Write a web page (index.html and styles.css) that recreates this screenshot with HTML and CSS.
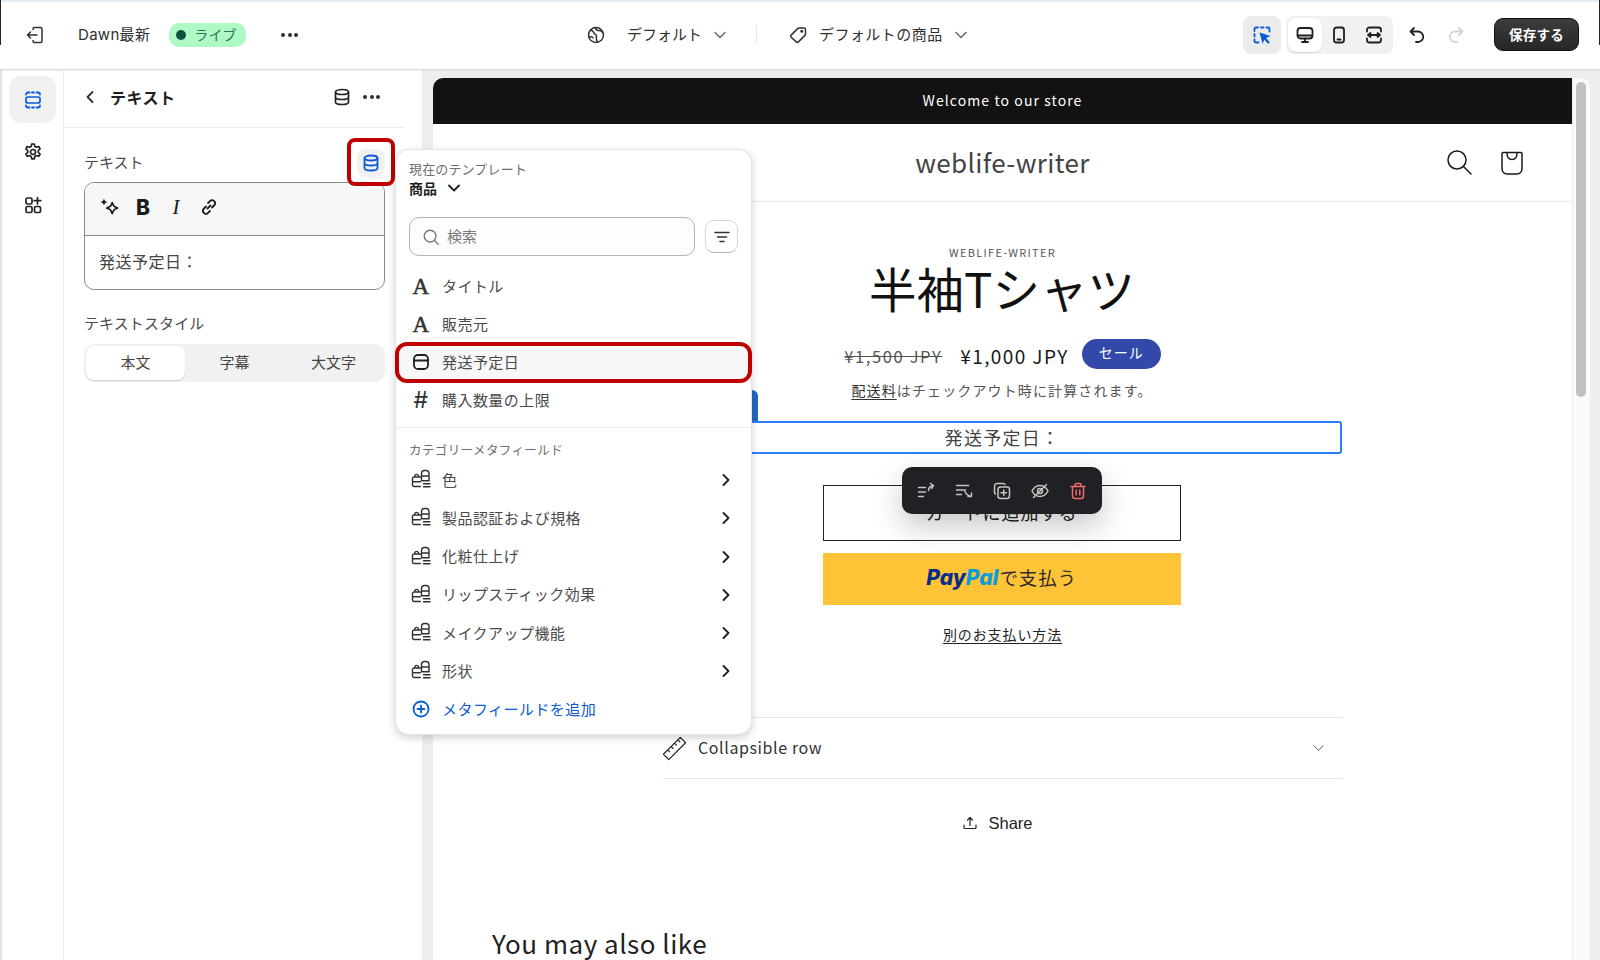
FILE: index.html
```html
<!DOCTYPE html>
<html lang="ja">
<head>
<meta charset="utf-8">
<title>テーマエディタ</title>
<link rel="stylesheet" href="styles.css">
</head>
<body>
<svg class="sprite"><symbol id="cat" viewBox="0 0 20 20"><path d="M9.300 17.500H3A1.500 1.500 0 0 1 1.500 16V9.500A1.500 1.500 0 0 1 3 8h6.300M3.700 8V6.800a2 2 0 0 1 3.800 0V8M1.500 12.800h7.800M10.500 11.800V4.500a3 3 0 0 1 3-3h1.500a3 3 0 0 1 3 3v7.300ZM10.500 7h7.500M12.500 14.800H19M12.500 17.800H19"/></symbol></svg>
<div class="app">
  <header class="topbar">
    <div class="tb-left">
      <svg class="ic20 exit" viewBox="0 0 20 20"><path d="M8 4.500V4a1.500 1.500 0 0 1 1.500-1.500h6A1.500 1.500 0 0 1 17 4v12a1.500 1.500 0 0 1-1.500 1.500h-6A1.500 1.500 0 0 1 8 16v-.5M12 10H2.500M5.500 7l-3 3 3 3"/></svg>
      <span class="theme">Dawn最新</span>
      <span class="live"><i class="dot"></i><span class="live-t">ライブ</span></span>
      <span class="dots"><i></i><i></i><i></i></span>
    </div>
    <div class="tb-center">
      <svg class="ic20 globe" viewBox="0 0 20 20"><circle cx="10" cy="10" r="7.500"/><path d="M4.500 5c2 .5 3 1.500 3.500 3 .4 1.300 2 1.300 2.500 2.500.4 1-.6 2-.2 3.200.3 1 .7 2 1 3.500M9.500 2.600c0 2 1.500 3 3 3 1.200 0 2.500.2 4 1.500M3 12.500c1.500-1 3-.8 4 .2"/></svg>
      <span class="ctx">デフォルト</span>
      <svg class="chev-g" viewBox="0 0 12 8"><path d="M1 1.500 6 6.500l5-5"/></svg>
      <span class="vsep"></span>
      <svg class="ic20 tag" viewBox="0 0 20 20"><path d="M11.500 3H16a1.500 1.500 0 0 1 1.500 1.500V9a2 2 0 0 1-.6 1.400l-6.500 6.500a1.500 1.500 0 0 1-2.100 0L3.100 12.200a1.500 1.500 0 0 1 0-2.100l6.500-6.500A2.800 2.800 0 0 1 11.500 3Z"/><circle cx="13.800" cy="6.200" r=".8"/></svg>
      <span class="ctx ctx2">デフォルトの商品</span>
      <svg class="chev-g" viewBox="0 0 12 8"><path d="M1 1.500 6 6.500l5-5"/></svg>
    </div>
    <div class="tb-right">
      <span class="sel-btn">
        <svg class="ic20 blue sel-ic" viewBox="0 0 20 20"><path class="dash" d="M6 2.500H4A1.500 1.500 0 0 0 2.500 4v2M2.500 9v2.500M2.500 14.500V16A1.500 1.500 0 0 0 4 17.500h2.500M9 2.500h2.500M14.500 2.500H16A1.500 1.500 0 0 1 17.500 4v2.500"/><path class="fillb" d="m7.500 7.500 11 3.500-4.500 2 3.800 4.200-1.800 1.500-3.800-4.200-1.500 4.500Z"/></svg>
      </span>
      <div class="device">
        <span class="dev active"><svg class="ic20" viewBox="0 0 20 20"><rect x="2.500" y="3" width="15" height="10.500" rx="3"/><path d="M3 10.500h14M7 17h6M10 13.500V17"/></svg></span>
        <span class="dev"><svg class="ic20" viewBox="0 0 20 20"><rect x="5" y="2.500" width="10" height="15" rx="2.500"/><path d="M8.500 14.500h3"/></svg></span>
        <span class="dev"><svg class="ic20" viewBox="0 0 20 20"><path d="M3 6.500V5a2.500 2.500 0 0 1 2.500-2.500h9A2.500 2.500 0 0 1 17 5v1.500M3 13.500V15a2.500 2.500 0 0 0 2.500 2.500h9A2.500 2.500 0 0 0 17 15v-1.500M5 10h10M6.500 8l-2.500 2 2.500 2M13.500 8l2.500 2-2.500 2"/></svg></span>
      </div>
      <svg class="ic20 undo" viewBox="0 0 20 20"><path d="M7 3 3.500 6.500 7 10M3.500 6.500H11a4.500 4.500 0 0 1 0 10.500H9"/></svg>
      <svg class="ic20 redo" viewBox="0 0 20 20"><path d="m13 3 3.500 3.500L13 10M16.500 6.500H9A4.500 4.500 0 0 0 9 17h2"/></svg>
      <span class="save">保存する</span>
    </div>
  </header>

  <div class="main">
    <nav class="rail">
      <span class="rail-item on"><svg class="ic20 blue" viewBox="0 0 20 20"><rect x="3" y="7" width="14" height="6" rx="2"/><path class="dash" d="M3 4.500A2 2 0 0 1 5 2.500h1.500M9 2.500h2M13.500 2.500H15a2 2 0 0 1 2 2M3 15.500a2 2 0 0 0 2 2h1.500M9 17.500h2M13.500 17.500H15a2 2 0 0 0 2-2"/></svg></span>
      <span class="rail-item"><svg class="ic20" viewBox="0 0 20 20"><circle cx="10" cy="10" r="2.500"/><path d="M8.700 2h2.600l.5 2.400 1.700.9 2.300-.8 1.300 2.300-1.800 1.700v1.800l1.800 1.700-1.300 2.300-2.300-.8-1.700.9-.5 2.400H8.700l-.5-2.400-1.700-.9-2.300.8-1.300-2.300 1.800-1.700V8.500L2.900 6.800l1.300-2.300 2.300.8 1.700-.9Z"/></svg></span>
      <span class="rail-item"><svg class="ic20" viewBox="0 0 20 20"><rect x="3" y="3" width="6" height="6" rx="1.500"/><rect x="3" y="11.500" width="6" height="6" rx="1.500"/><rect x="11.500" y="11.500" width="6" height="6" rx="1.500"/><path d="M14.500 2.500v6.500M11.200 5.700h6.600"/></svg></span>
    </nav>

    <aside class="panel">
      <div class="panel-head">
        <svg class="back" viewBox="0 0 10 14"><path d="M7.500 2 2.500 7l5 5"/></svg>
        <span class="panel-title">テキスト</span>
        <svg class="ic20 db-head" viewBox="0 0 20 20"><ellipse cx="10" cy="5" rx="6.500" ry="2.500"/><path d="M3.500 5v10c0 1.400 2.900 2.500 6.500 2.500s6.500-1.100 6.500-2.500V5M3.500 10c0 1.400 2.900 2.500 6.500 2.500s6.500-1.100 6.500-2.500"/></svg>
        <span class="dots dark"><i></i><i></i><i></i></span>
      </div>
      <div class="panel-body">
        <div class="field-label">
          <span class="fl-text">テキスト</span>
          <span class="db-btn"><svg class="ic20 blue db-blue" viewBox="0 0 20 20"><ellipse cx="10" cy="5" rx="6.500" ry="2.500"/><path d="M3.500 5v10c0 1.400 2.900 2.500 6.500 2.500s6.500-1.100 6.500-2.500V5M3.500 10c0 1.400 2.900 2.500 6.500 2.500s6.500-1.100 6.500-2.500"/></svg></span>
        </div>
        <div class="editor">
          <div class="ed-tools">
            <svg class="ic20 spark" viewBox="0 0 20 20"><path d="m12 6 1.600 3.400 3.400 1.600-3.400 1.600L12 16l-1.600-3.400L7 11l3.400-1.600Z"/><path class="fillk" d="M4.500 2.500 5.500 4.500 7.500 5.500 5.500 6.500 4.500 8.500 3.500 6.500 1.500 5.500 3.500 4.500Z"/></svg>
            <span class="b">B</span>
            <span class="i">I</span>
            <svg class="ic20 link" viewBox="0 0 20 20"><path d="m8.500 11.500 3-3M7 9.500l-2.500 2.500a3 3 0 0 0 4.200 4.200L11 14M13 10.500l2.500-2.500a3 3 0 0 0-4.200-4.200L9 6"/></svg>
          </div>
          <div class="ed-text">発送予定日：</div>
        </div>
        <div class="style-label">テキストスタイル</div>
        <div class="seg">
          <span class="seg-item on">本文</span>
          <span class="seg-item">字幕</span>
          <span class="seg-item">大文字</span>
        </div>
      </div>
    </aside>

    <section class="preview">
      <div class="store">
        <div class="announce">Welcome to our store</div>
        <div class="store-head">
          <span class="logo">weblife-writer</span>
          <svg class="s-search" viewBox="0 0 26 26"><circle cx="11" cy="11" r="9"/><path d="m17.500 17.500 7.500 7.500"/></svg>
          <svg class="s-cart" viewBox="0 0 26 26"><path d="M4 2.500h18a1.500 1.500 0 0 1 1 1.500v15a5 5 0 0 1-5 5H8a5 5 0 0 1-5-5V4a1.500 1.500 0 0 1 1-1.500ZM8 3c0 4 2 6.500 5 6.500S18 7 18 3"/></svg>
        </div>
        <div class="product">
          <div class="vendor">WEBLIFE-WRITER</div>
          <h1 class="p-title">半袖Tシャツ</h1>
          <div class="price">
            <s class="old">¥1,500 JPY</s>
            <span class="new">¥1,000 JPY</span>
            <span class="sale">セール</span>
          </div>
          <div class="ship"><u>配送料</u>はチェックアウト時に計算されます。</div>
          <div class="picked">発送予定日：</div>
          <div class="cart">カートに追加する</div>
          <div class="paypal"><b class="pp-a">Pay</b><b class="pp-b">Pal</b><span>で支払う</span></div>
          <div class="alt"><u>別のお支払い方法</u></div>
          <div class="coll">
            <svg class="ruler" viewBox="0 0 26 26"><path d="M1.500 19 19 1.500 24.500 7 7 24.500ZM6 14.500l2 2M9.500 11l2 2M13 7.500l2 2M16.500 4l2 2"/></svg>
            <span class="coll-t">Collapsible row</span>
            <svg class="coll-c" viewBox="0 0 12 8"><path d="M1 1.500 6 6.500l5-5"/></svg>
          </div>
          <div class="share">
            <svg class="share-i" viewBox="0 0 14 14"><path d="M7 9.500V1.500M4.500 4 7 1.500 9.500 4M1 9v2.500a1 1 0 0 0 1 1h10a1 1 0 0 0 1-1V9"/></svg>
            <span>Share</span>
          </div>
        </div>
        <h2 class="also">You may also like</h2>
      </div>
      <div class="scroll"><span class="thumb"></span></div>
    </section>
  </div>

  <div class="float-tools">
    <svg class="ic20" viewBox="0 0 20 20"><path d="M2.500 6.500h7M2.500 11h7M2.500 15.500h5M12.500 9.500c0-2.500 1.500-4.500 5-5M14.500 2.500l3 2-2 3"/></svg>
    <svg class="ic20" viewBox="0 0 20 20"><path d="M2.500 4.500h12M2.500 9h9M2.500 13.500h5M11 10.500c1 2.500 3 4.500 6.500 5M17.500 12v3.500H14"/></svg>
    <svg class="ic20" viewBox="0 0 20 20"><rect x="6" y="6" width="11.500" height="11.500" rx="2.500"/><path d="M3.500 13A1.500 1.500 0 0 1 2.500 11.500V5A2.500 2.500 0 0 1 5 2.500h6.500A1.500 1.500 0 0 1 13 3.500M11.750 9v5.500M9 11.750h5.500"/></svg>
    <svg class="ic20" viewBox="0 0 20 20"><path d="M2 10s3-5.500 8-5.500 8 5.500 8 5.500-3 5.500-8 5.500S2 10 2 10ZM3.500 16.500l13-13"/><circle cx="10" cy="10" r="2.500"/></svg>
    <svg class="ic20 red" viewBox="0 0 20 20"><path d="M3 5.500h14M7 5.500V4a1.500 1.500 0 0 1 1.500-1.500h3A1.500 1.500 0 0 1 13 4v1.500M4.500 5.500v9.500a2.500 2.500 0 0 0 2.500 2.500h6a2.500 2.500 0 0 0 2.500-2.500V5.500M8.200 9v5M11.800 9v5"/></svg>
  </div>

  <div class="popup">
    <div class="pop-cap">現在のテンプレート</div>
    <div class="pop-tpl"><span>商品</span><svg class="chev-k" viewBox="0 0 12 8"><path d="M1 1.500 6 6.500l5-5"/></svg></div>
    <div class="pop-search">
      <div class="search-box">
        <svg class="ic18" viewBox="0 0 20 20"><circle cx="9" cy="9" r="6.500"/><path d="m14 14 4 4"/></svg>
        <span class="search-t">検索</span>
      </div>
      <span class="filter"><svg class="ic20" viewBox="0 0 20 20"><path d="M3 5.500h14M5.500 10h9M8 14.500h4"/></svg></span>
    </div>
    <ul class="list">
      <li class="row"><span class="a-ic">A</span>タイトル</li>
      <li class="row"><span class="a-ic">A</span>販売元</li>
      <li class="row hl"><svg class="ic20 row-ic cal" viewBox="0 0 20 20"><rect x="3" y="3" width="14" height="14" rx="4"/><path d="M3 8.500h14"/></svg>発送予定日</li>
      <li class="row"><span class="hash">#</span>購入数量の上限</li>
    </ul>
    <div class="pop-div"></div>
    <div class="pop-h">カテゴリーメタフィールド</div>
    <ul class="list">
      <li class="row"><svg class="ic20 row-ic cat"><use href="#cat"/></svg>色<svg class="chev-r" viewBox="0 0 8 12"><path d="m1.500 1 5 5-5 5"/></svg></li>
      <li class="row"><svg class="ic20 row-ic cat"><use href="#cat"/></svg>製品認証および規格<svg class="chev-r" viewBox="0 0 8 12"><path d="m1.500 1 5 5-5 5"/></svg></li>
      <li class="row"><svg class="ic20 row-ic cat"><use href="#cat"/></svg>化粧仕上げ<svg class="chev-r" viewBox="0 0 8 12"><path d="m1.500 1 5 5-5 5"/></svg></li>
      <li class="row"><svg class="ic20 row-ic cat"><use href="#cat"/></svg>リップスティック効果<svg class="chev-r" viewBox="0 0 8 12"><path d="m1.500 1 5 5-5 5"/></svg></li>
      <li class="row"><svg class="ic20 row-ic cat"><use href="#cat"/></svg>メイクアップ機能<svg class="chev-r" viewBox="0 0 8 12"><path d="m1.500 1 5 5-5 5"/></svg></li>
      <li class="row"><svg class="ic20 row-ic cat"><use href="#cat"/></svg>形状<svg class="chev-r" viewBox="0 0 8 12"><path d="m1.500 1 5 5-5 5"/></svg></li>
      <li class="row add"><svg class="ic20 row-ic blue" viewBox="0 0 20 20"><circle cx="10" cy="10" r="7.500"/><path d="M10 6.500v7M6.500 10h7"/></svg>メタフィールドを追加</li>
    </ul>
  </div>
</div>
</body>
</html>
```

FILE: styles.css
```css
* { box-sizing: border-box; }
html, body { margin: 0; padding: 0; }
body { font-family: "Inter", "Noto Sans CJK JP", sans-serif; color: #303030; background: #fff; }
ul { list-style: none; margin: 0; padding: 0; }
h1, h2 { margin: 0; font-weight: 400; }

svg { fill: none; stroke: currentColor; stroke-linecap: round; stroke-linejoin: round; flex: none; display: block; }
.sprite { display: none; }
.ic20 { width: 20px; height: 20px; stroke-width: 1.500; }
.ic18 { width: 18px; height: 18px; stroke-width: 1.500; }
.blue { color: #0a5ad6; }
.red { color: #f46a6a; }
.fillb { fill: #0a5ad6; stroke: none; }
.fillk { fill: #1a1a1a; stroke: none; }

.app { position: relative; width: 1600px; height: 960px; overflow: hidden; display: flex; flex-direction: column; }
.app::before, .app::after { content: ""; position: absolute; top: 0; width: 1px; height: 45px; background: #222; z-index: 3; }
.app::before { left: 0; }
.app::after { right: 0; }

/* top bar */
.topbar { height: 70px; flex: none; display: flex; align-items: center; background: #fff; border-top: 2px solid #e3edf1; border-bottom: 1px solid #d9d9d9; box-shadow: 0 1px 1px rgba(0,0,0,.05); position: relative; z-index: 2; padding-bottom: 2px; }
.tb-left { display: flex; align-items: center; width: 564px; padding-left: 25px; flex: none; }
.exit { color: #303030; }
.theme { margin-left: 33px; font-size: 15px; color: #303030; letter-spacing: .3px; padding-bottom: 2px; }
.live { margin-left: 19px; height: 24px; width: 77px; border-radius: 10px; background: #aff9c5; color: #2d7355; font-size: 14px; display: flex; align-items: center; padding-left: 7px; gap: 8px; letter-spacing: .2px; }
.live-t { padding-bottom: 2px; }
.dot { width: 10px; height: 10px; border-radius: 50%; background: #0b5340; }
.dots { display: inline-flex; gap: 2.500px; margin-left: 35px; }
.dots i { width: 4px; height: 4px; border-radius: 50%; background: #303030; }
.tb-center { display: flex; align-items: center; flex: none; width: 430px; padding-left: 22px; }
.ctx { margin-left: 21px; font-size: 15px; color: #303030; padding-bottom: 2px; }
.ctx2 { margin-left: 11px; letter-spacing: .45px; }
.chev-g { width: 12px; height: 8px; margin-left: 12px; stroke: #6b6b6b; stroke-width: 1.500; }
.vsep { width: 1px; height: 19px; background: #e6e6e6; margin-left: 30px; margin-right: 31px; }
.tb-right { display: flex; align-items: center; margin-left: 249px; }
.sel-btn { width: 38px; height: 38px; background: #ebebeb; border-radius: 8px; display: flex; align-items: center; justify-content: center; }
.dash { stroke-width: 1.800; }
.device { margin-left: 5px; width: 107px; height: 38px; padding: 2px; background: #f1f1f1; border-radius: 8px; display: flex; }
.dev { width: 35px; height: 34px; display: flex; align-items: center; justify-content: center; border-radius: 8px; color: #1f1f1f; }
.dev svg { stroke-width: 1.800; }
.dev.active { background: #fff; box-shadow: 0 1px 1px rgba(0,0,0,.12); }
.undo { margin-left: 14px; color: #222; stroke-width: 1.800; }
.redo { margin-left: 19px; color: #d4d4d4; stroke-width: 1.800; }
.save { margin-left: 28px; width: 85px; height: 33px; border-radius: 9px; background: linear-gradient(#3d3d3d, #262626); border: 1px solid #111; color: #fff; font-size: 13.500px; font-weight: 600; display: flex; align-items: center; justify-content: center; letter-spacing: .3px; padding-bottom: 2px; }

/* main */
.main { flex: 1; display: flex; min-height: 0; background: #eeeeee; }
.rail { width: 64px; flex: none; background: #fff; border-left: 2px solid #e4e4e4; border-right: 1px solid #ececec; padding: 6px 6px 0 7px; display: flex; flex-direction: column; }
.rail-item { width: 47px; height: 47px; border-radius: 12px; display: flex; align-items: center; justify-content: center; color: #222; margin-bottom: 5.500px; }
.rail-item.on { background: #f0f0f0; }
.rail-item svg { stroke-width: 1.700; }

/* settings panel */
.panel { width: 358px; flex: none; background: #fff; padding-right: 18px; }
.panel-head { height: 58px; display: flex; align-items: center; padding: 0 0 3px 21px; border-bottom: 1px solid #ececec; }
.back { width: 10px; height: 14px; stroke: #303030; stroke-width: 1.800; }
.panel-title { margin-left: 15px; font-size: 16px; font-weight: 700; color: #1f1f1f; letter-spacing: .5px; flex: 1; }
.db-head { color: #222; stroke-width: 1.700; }
.dots.dark { margin-left: 11px; margin-right: 24px; }
.panel-body { padding: 21px 19px 0 20px; }
.field-label { display: flex; align-items: center; justify-content: space-between; height: 28px; font-size: 15px; color: #4a4a4a; }
.fl-text { padding-bottom: 3px; }
.db-btn { width: 28px; height: 28px; border-radius: 8px; background: #f1f1f1; display: flex; align-items: center; justify-content: center; position: relative; }
.db-blue { stroke-width: 1.800; }
.db-btn::after { content: ""; position: absolute; inset: -11px -10px -9px -10px; border: 4px solid #c00000; border-radius: 8px; }
.editor { margin-top: 5px; height: 108px; border: 1px solid #8a8a8a; border-radius: 10px; overflow: hidden; }
.ed-tools { height: 53px; background: #f7f7f7; border-bottom: 1px solid #8a8a8a; display: flex; align-items: center; padding: 0 0 4px 14px; color: #1a1a1a; }
.spark { width: 22px; height: 22px; margin-right: 12px; }
.link { stroke-width: 1.800; }
.b { width: 20px; margin-right: 13px; text-align: center; font-size: 21px; font-weight: 800; font-family: "Inter", sans-serif; }
.i { width: 20px; margin-right: 13px; text-align: center; font-size: 21px; font-style: italic; font-family: "Liberation Serif", serif; }
.ed-text { padding: 14px 0 0 14px; font-size: 16px; line-height: 24px; color: #444; letter-spacing: .5px; }
.style-label { margin-top: 23px; font-size: 15px; line-height: 22px; color: #4a4a4a; letter-spacing: .1px; }
.seg { margin-top: 9px; height: 38px; background: #f1f1f1; border-radius: 10px; padding: 2px; display: flex; }
.seg-item { flex: 1; display: flex; align-items: center; justify-content: center; font-size: 15px; color: #444; border-radius: 8px; padding-bottom: 4px; }
.seg-item.on { background: #fff; box-shadow: 0 1px 1px rgba(0,0,0,.14); }

/* preview */
.preview { width: 1157px; margin: 8px 0 0 11px; flex: none; display: flex; background: #fff; border-radius: 10px 10px 0 0; overflow: hidden; }
.store { width: 1139px; flex: none; font-family: "Noto Sans CJK JP", sans-serif; color: #1a1a1a; }
.announce { height: 46px; background: #121212; color: #fff; display: flex; align-items: center; justify-content: center; font-size: 14px; letter-spacing: 1.080px; padding-bottom: 2px; }
.store-head { height: 78px; position: relative; display: flex; align-items: center; justify-content: center; border-bottom: 1px solid #eaeaea; }
.logo { font-size: 26px; letter-spacing: .35px; color: #444; padding-bottom: 2px; }
.s-search, .s-cart { position: absolute; width: 26px; height: 26px; stroke: #1a1a1a; stroke-width: 1.500; }
.s-search { left: 1013px; top: 25px; }
.s-cart { left: 1066px; top: 26px; }
.product { width: 679px; margin: 0 auto; padding-top: 42px; display: flex; flex-direction: column; align-items: center; }
.vendor { height: 16px; line-height: 16px; font-size: 11px; letter-spacing: 1.300px; color: #555; }
.p-title { height: 60px; line-height: 56px; font-size: 47.500px; color: #111; margin-top: 0; margin-right: 1px; }
.price { margin-top: 19px; height: 30px; display: flex; align-items: center; }
.old { font-size: 16.500px; letter-spacing: 1.600px; color: #555; padding-top: 4px; }
.new { margin-left: 18px; font-size: 19px; letter-spacing: 1.400px; color: #1a1a1a; padding-top: 2px; }
.sale { margin-left: 13px; width: 79px; height: 30px; border-radius: 15px; background: #3349aa; color: #fff; font-size: 14px; letter-spacing: 1px; display: flex; align-items: center; justify-content: center; padding-bottom: 4px; }
.ship { margin-top: 11px; height: 20px; line-height: 20px; font-size: 14px; letter-spacing: 1.130px; color: #555; padding-right: 1px; }
.ship u { text-underline-offset: 3px; color: #333; }
.picked { position: relative; align-self: stretch; margin-top: 21px; height: 33px; border: 2px solid #2b7fff; border-radius: 3px; font-size: 18px; letter-spacing: 1.300px; color: #444; display: flex; align-items: center; justify-content: center; padding-bottom: 2px; }
.picked::before { content: ""; position: absolute; left: -2px; bottom: 31px; width: 95px; height: 31px; background: #2467c8; border-radius: 6px 6px 0 0; }
.cart { margin-top: 31px; width: 358px; height: 56px; border: 1.500px solid #222; font-size: 18px; letter-spacing: 1px; display: flex; align-items: center; justify-content: center; color: #222; padding-bottom: 3px; margin-right: 2px; }
.paypal { margin-top: 12px; width: 358px; height: 52px; background: #ffc338; display: flex; align-items: center; justify-content: center; font-size: 18.500px; letter-spacing: .8px; color: #2b2b2b; padding-bottom: 4px; margin-right: 2px; }
.pp-a, .pp-b { font-family: "Inter", sans-serif; font-style: italic; font-weight: 800; font-size: 21px; letter-spacing: 0; }
.pp-a { color: #0b2d87; }
.pp-b { color: #0c9bdc; margin-right: 1px; }
.alt { margin-top: 19px; height: 20px; line-height: 20px; font-size: 14px; letter-spacing: .9px; color: #222; }
.alt u { text-underline-offset: 3px; }
.coll { align-self: stretch; margin-top: 73px; height: 62px; border-top: 1px solid #e6e6e6; border-bottom: 1px solid #e6e6e6; display: flex; align-items: center; }
.ruler { width: 25px; height: 27px; stroke: #222; stroke-width: 1.200; margin-left: -1px; }
.coll-t { margin-left: 11px; flex: 1; font-size: 16px; letter-spacing: .6px; color: #333; padding-bottom: 3px; }
.coll-c { width: 11px; height: 8px; margin-right: 18px; stroke: #444; stroke-width: 1; }
.share { margin-top: 32px; height: 24px; display: flex; align-items: center; font-family: "Liberation Sans", sans-serif; font-size: 16.500px; color: #222; margin-right: 9px; }
.share-i { width: 14px; height: 14px; stroke: #222; stroke-width: 1.200; margin-right: 11px; }
.also { margin: 88px 0 0 59px; font-size: 26px; line-height: 40px; letter-spacing: .5px; color: #222; }
.scroll { width: 18px; flex: none; background: #fafafa; border-left: 1px solid #ececec; padding: 4px 4px 0 3px; }
.thumb { display: block; width: 10px; height: 315px; background: #c1c1c1; border-radius: 5px; }

/* floating section toolbar */
.float-tools { position: absolute; left: 902px; top: 467px; width: 200px; height: 47px; background: #1f2124; border-radius: 10px; box-shadow: 0 12px 30px rgba(0,0,0,.22); color: #c4c4c4; display: flex; align-items: center; justify-content: space-between; padding: 0 14px; z-index: 4; }
.float-tools .red { color: #f46a6a; }

/* dynamic source popup */
.popup { position: absolute; left: 395px; top: 149px; width: 357px; height: 586px; background: #fff; border: 1px solid #e3e3e3; border-radius: 14px; box-shadow: 0 3px 8px rgba(0,0,0,.18); padding-top: 10px; z-index: 5; }
.pop-cap { padding-left: 13px; font-size: 13px; line-height: 18px; color: #6d6d6d; letter-spacing: .15px; }
.pop-tpl { padding-left: 13px; margin-top: 1px; height: 18px; display: flex; align-items: center; font-size: 14px; font-weight: 700; color: #1f1f1f; }
.chev-k { width: 12px; height: 8px; margin-left: 11px; stroke: #1f1f1f; stroke-width: 1.800; }
.pop-search { margin-top: 20px; padding-left: 13px; display: flex; align-items: center; }
.search-box { width: 286px; height: 39px; border: 1px solid #b5b5b5; border-radius: 10px; background: #fdfdfd; display: flex; align-items: center; padding-left: 12px; gap: 7px; font-size: 15px; color: #7a7a7a; }
.search-t { padding-bottom: 2px; }
.filter { margin-left: 10px; width: 33px; height: 33px; border: 1px solid #d6d6d6; border-bottom-color: #b5b5b5; border-radius: 9px; display: flex; align-items: center; justify-content: center; color: #303030; }
.list:nth-of-type(1) { margin-top: 10px; }
.row { position: relative; height: 38.250px; display: flex; align-items: center; padding: 0 0 0 46px; font-size: 15px; color: #4a4a4a; letter-spacing: .45px; }
.a-ic, .hash { position: absolute; left: 13px; width: 24px; text-align: center; color: #303030; }
.a-ic { font-family: "Liberation Serif", serif; font-size: 23px; font-weight: 400; -webkit-text-stroke: .5px #303030; padding-top: 3px; }
.hash { font-family: "Inter", sans-serif; font-size: 23px; font-weight: 400; }
.row-ic { position: absolute; left: 15px; color: #303030; }
.row-ic.blue { color: #0a5ad6; stroke-width: 1.800; }
.cal { color: #1f1f1f; stroke-width: 1.800; }
.cat { stroke-width: 1.400; color: #303030; }
.hl { background: #f7f7f7; }
.hl::after { content: ""; position: absolute; inset: -1px -1px -2px -1px; border: 4px solid #c00000; border-radius: 12px; }
.pop-div { height: 1px; margin-top: 8px; background: #ededed; }
.pop-h { padding: 13px 0 0 13px; height: 32px; line-height: 20px; font-size: 12.500px; color: #6d6d6d; letter-spacing: .4px; }
.chev-r { position: absolute; left: 326px; margin-top: 2px; width: 8px; height: 12px; stroke: #1f1f1f; stroke-width: 1.800; }
.add { color: #0a5ad6; }
```
